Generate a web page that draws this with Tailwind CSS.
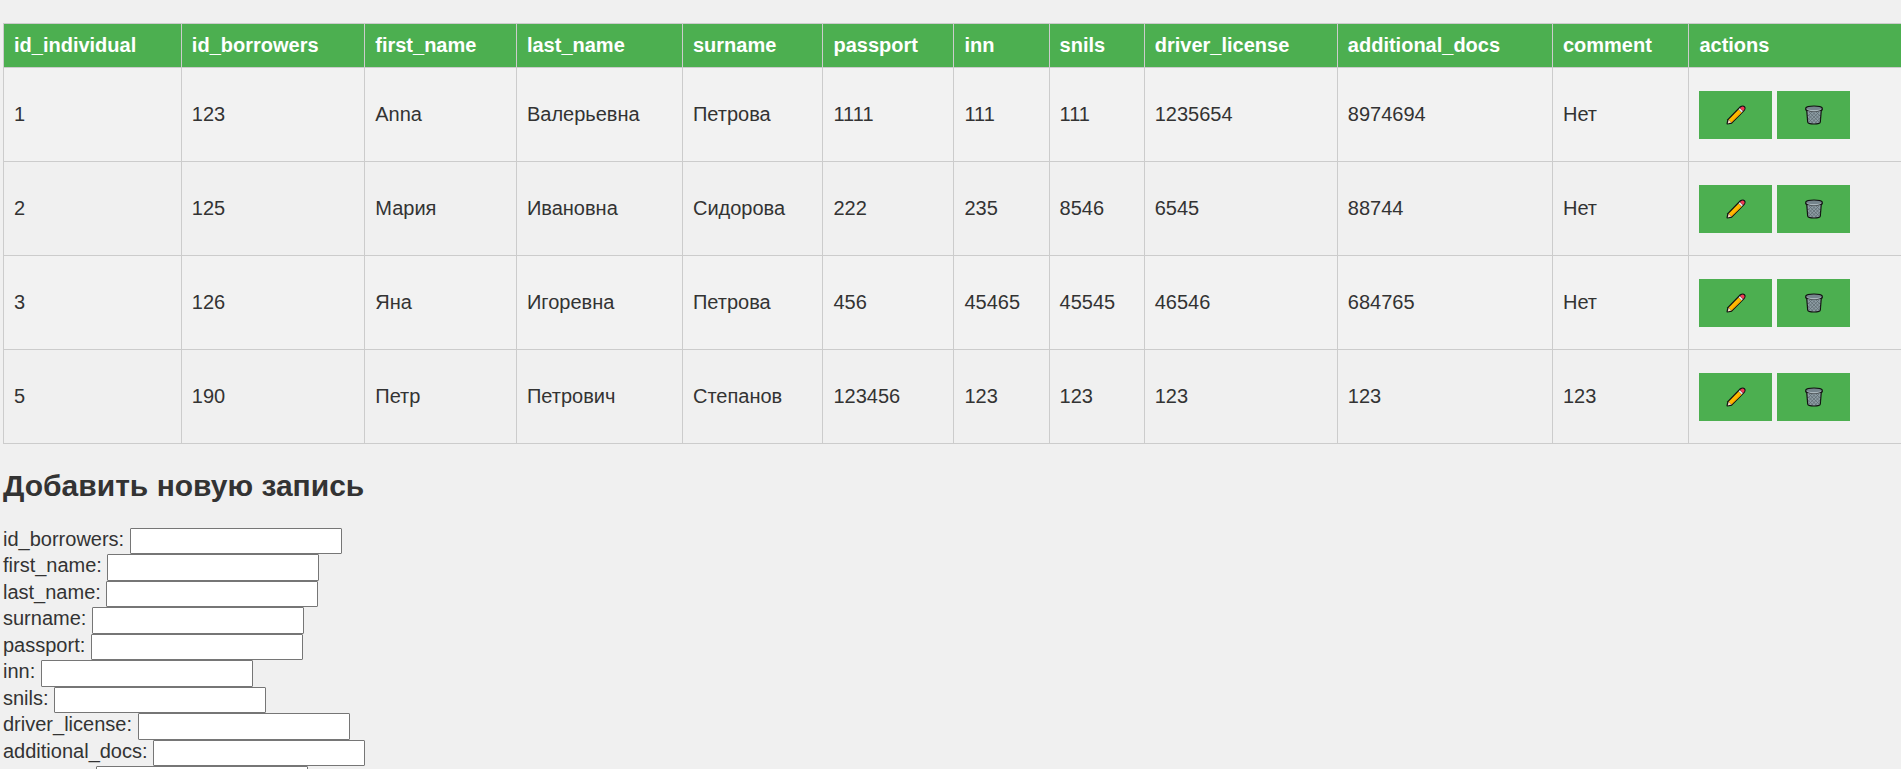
<!DOCTYPE html>
<html lang="ru">
<head>
<meta charset="utf-8">
<meta name="viewport" content="width=device-width, initial-scale=1">
<title>Добавить новую запись</title>
<script src="https://cdn.jsdelivr.net/npm/@tailwindcss/browser@4"></script>
</head>
<body class="overflow-x-hidden bg-[#f0f0f0] pt-[23px] pl-[3px] font-['Liberation_Sans',Arial,sans-serif] text-[20px] leading-[23px] text-[#333]">

<svg class="hidden" aria-hidden="true">
  <symbol id="pencil" viewBox="0 0 20 20">
    <path d="M.5 18.500 1.400 14.300 14 1.300Q15.500.3 17.200.4q2.200.4 2.400 2.400.1 1.700-1 3L5.800 18.700 1.500 19.600Q.3 19.600.5 18.500Z" fill="#111"/>
    <path d="M2.600 14.700 12.600 4.400 15.700 7.400 5.400 17.600Z" fill="#ffb900"/>
    <path d="M4.700 16.900 15 6.700 15.700 7.400 5.400 17.600Z" fill="#f9a200"/>
    <path d="M1.700 18.500 2.600 14.700 5.400 17.600Z" fill="#f9dcc0"/>
    <path d="m12.600 4.400 1.300-1.400 3.100 3.100-1.300 1.300Z" fill="#dde2e5"/>
    <path d="M13.900 3Q16.300.7 17.900 1.900 19.600 3.700 17 6.100Z" fill="#ef3b54"/>
  </symbol>
  <symbol id="trash" viewBox="0 0 20 20">
    <path d="M1.200 2.800Q2.200.4 10 .4t8.800 2.400q.6 2.400-1 3.200L16.900 17Q16.600 19.600 10 19.600T3.100 17L2.200 6Q.6 5.200 1.200 2.800Z" fill="#111"/>
    <path d="M3.400 5.900Q10 7.200 16.600 5.900L15.700 16.700Q15.300 18.400 10 18.400T4.300 16.700Z" fill="#8c9ba3"/>
    <path d="M4 9.500 12.500 18M3.800 13 8.800 18M5 7 15.500 17.500M8.500 7 15.800 14.300M12 7 16.200 11.200M16 9.500 7.500 18M16.200 13 11.200 18M15 7 4.500 17.500M11.500 7 4.200 14.300M8 7 3.800 11.200" fill="none" stroke="#5b686f" stroke-width=".7"/>
    <path d="M2.300 3.300Q3.500 1.600 10 1.600t7.700 1.700Q17.500 5.500 10 5.500T2.300 3.300Z" fill="#75848c"/>
    <path d="M2.300 3.500Q4 5 10 5t7.700-1.500Q17.500 6.300 10 6.300T2.300 3.500Z" fill="#a9b6bc"/>
  </symbol>
</svg>

<div class="-mr-[2px]">
<table class="w-full border-collapse text-left [&_td]:border [&_td]:border-[#ccc] [&_td]:px-[10px] [&_th]:border [&_th]:border-[#ccc] [&_th]:p-[10px]">
  <thead class="bg-[#4caf50] text-white">
    <tr><th>id_individual</th><th>id_borrowers</th><th>first_name</th><th>last_name</th><th>surname</th><th>passport</th><th>inn</th><th>snils</th><th>driver_license</th><th>additional_docs</th><th>comment</th><th>actions</th></tr>
  </thead>
  <tbody>
    <tr class="h-[94px] odd:bg-[#f2f2f2]"><td>1</td><td>123</td><td>Anna</td><td>Валерьевна</td><td>Петрова</td><td>1111</td><td>111</td><td>111</td><td>1235654</td><td>8974694</td><td>Нет</td>
      <td><div class="flex gap-[5px]"><button type="button" aria-label="Изменить" class="flex h-12 w-[73px] shrink-0 items-center justify-center bg-[#4caf50]"><svg class="size-5"><use href="#pencil"/></svg></button><button type="button" aria-label="Удалить" class="flex h-12 w-[73px] shrink-0 items-center justify-center bg-[#4caf50]"><svg class="size-5"><use href="#trash"/></svg></button></div></td></tr>
    <tr class="h-[94px] odd:bg-[#f2f2f2]"><td>2</td><td>125</td><td>Мария</td><td>Ивановна</td><td>Сидорова</td><td>222</td><td>235</td><td>8546</td><td>6545</td><td>88744</td><td>Нет</td>
      <td><div class="flex gap-[5px]"><button type="button" aria-label="Изменить" class="flex h-12 w-[73px] shrink-0 items-center justify-center bg-[#4caf50]"><svg class="size-5"><use href="#pencil"/></svg></button><button type="button" aria-label="Удалить" class="flex h-12 w-[73px] shrink-0 items-center justify-center bg-[#4caf50]"><svg class="size-5"><use href="#trash"/></svg></button></div></td></tr>
    <tr class="h-[94px] odd:bg-[#f2f2f2]"><td>3</td><td>126</td><td>Яна</td><td>Игоревна</td><td>Петрова</td><td>456</td><td>45465</td><td>45545</td><td>46546</td><td>684765</td><td>Нет</td>
      <td><div class="flex gap-[5px]"><button type="button" aria-label="Изменить" class="flex h-12 w-[73px] shrink-0 items-center justify-center bg-[#4caf50]"><svg class="size-5"><use href="#pencil"/></svg></button><button type="button" aria-label="Удалить" class="flex h-12 w-[73px] shrink-0 items-center justify-center bg-[#4caf50]"><svg class="size-5"><use href="#trash"/></svg></button></div></td></tr>
    <tr class="h-[94px] odd:bg-[#f2f2f2]"><td>5</td><td>190</td><td>Петр</td><td>Петрович</td><td>Степанов</td><td>123456</td><td>123</td><td>123</td><td>123</td><td>123</td><td>123</td>
      <td><div class="flex gap-[5px]"><button type="button" aria-label="Изменить" class="flex h-12 w-[73px] shrink-0 items-center justify-center bg-[#4caf50]"><svg class="size-5"><use href="#pencil"/></svg></button><button type="button" aria-label="Удалить" class="flex h-12 w-[73px] shrink-0 items-center justify-center bg-[#4caf50]"><svg class="size-5"><use href="#trash"/></svg></button></div></td></tr>
  </tbody>
</table>
</div>

<h2 class="my-[25px] text-[30px] leading-[34px] font-bold">Добавить новую запись</h2>

<form class="[&_input]:h-full [&_input]:w-[212px] [&_input]:rounded-[1px] [&_input]:border [&_input]:border-[#767676] [&_input]:bg-white [&_input]:px-[3px] [&_input]:text-[17px] [&_label]:whitespace-pre [&>div]:flex [&>div:nth-child(odd)]:h-[26px] [&>div:nth-child(even)]:h-[27px]">
  <div><label for="id_borrowers">id_borrowers: </label><input type="text" id="id_borrowers" name="id_borrowers"></div>
  <div><label for="first_name">first_name: </label><input type="text" id="first_name" name="first_name"></div>
  <div><label for="last_name">last_name: </label><input type="text" id="last_name" name="last_name"></div>
  <div><label for="surname">surname: </label><input type="text" id="surname" name="surname"></div>
  <div><label for="passport">passport: </label><input type="text" id="passport" name="passport"></div>
  <div><label for="inn">inn: </label><input type="text" id="inn" name="inn"></div>
  <div><label for="snils">snils: </label><input type="text" id="snils" name="snils"></div>
  <div><label for="driver_license">driver_license: </label><input type="text" id="driver_license" name="driver_license"></div>
  <div><label for="additional_docs">additional_docs: </label><input type="text" id="additional_docs" name="additional_docs"></div>
  <div><label for="comment">comment: </label><input type="text" id="comment" name="comment"></div>
</form>
</body>
</html>
